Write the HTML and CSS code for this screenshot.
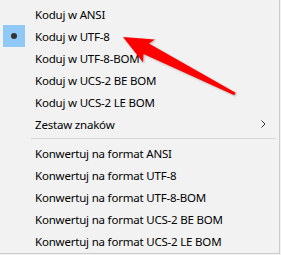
FILE: index.html
```html
<!DOCTYPE html>
<html lang="pl">
<head>
    <meta charset="UTF-8">
    <title>Kodowanie</title>
    <link rel="stylesheet" href="styles.css">
</head>
<body>

<div class="menu">
    <div class="item"><span class="mark"></span>Koduj w ANSI</div>
    <div class="item checked"><span class="mark"><span class="dot"></span></span>Koduj w UTF-8</div>
    <div class="item"><span class="mark"></span>Koduj w UTF-8-BOM</div>
    <div class="item"><span class="mark"></span>Koduj w UCS-2 BE BOM</div>
    <div class="item"><span class="mark"></span>Koduj w UCS-2 LE BOM</div>
    <div class="item"><span class="mark"></span>Zestaw znaków
        <svg class="sub" width="5" height="8" viewBox="0 0 5 8"><path d="M0.5 0.5 L4 4 L0.5 7.5" fill="none" stroke="#333" stroke-width="1"/></svg>
    </div>
    <div class="sep"></div>
    <div class="item"><span class="mark"></span>Konwertuj na format ANSI</div>
    <div class="item"><span class="mark"></span>Konwertuj na format UTF-8</div>
    <div class="item"><span class="mark"></span>Konwertuj na format UTF-8-BOM</div>
    <div class="item"><span class="mark"></span>Konwertuj na format UCS-2 BE BOM</div>
    <div class="item"><span class="mark"></span>Konwertuj na format UCS-2 LE BOM</div>

    <svg class="arrow" width="281" height="255" viewBox="0 0 281 255">
        <polygon points="123,37 155,39.5 148.9,43.5 235.7,92.7 234.3,95.3 143.5,54.1 143,62.5" fill="#f00"/>
    </svg>
</div>

</body>
</html>
```

FILE: styles.css
```css
body {
    margin: 0;
    background: #f2f2f2;
    font-family: "Noto Sans", "Open Sans", sans-serif;
    font-size: 11.5px;
    letter-spacing: -0.2px;
    color: #000;
}
.menu {
    position: relative;
    width: 280px;
    height: 254px;
    box-sizing: border-box;
    padding-top: 3px;
    background: #f2f2f2;
    border-right: 1px solid #cccccc;
    border-bottom: 1px solid #cccccc;
}
.item {
    display: flex;
    align-items: center;
    height: 22px;
    white-space: nowrap;
}
.mark {
    display: flex;
    align-items: center;
    justify-content: center;
    width: 22px;
    height: 22px;
    margin-left: 3px;
    margin-right: 10px;
}
.checked .mark {
    background: #90c8f6;
}
.dot {
    width: 6px;
    height: 6px;
    border-radius: 50%;
    background: #333;
}
.sub {
    margin-left: auto;
    margin-right: 13px;
}
.sep {
    height: 1px;
    margin: 3px 3px 3px 31px;
    background: #d7d7d7;
}
.arrow {
    position: absolute;
    left: 0;
    top: 0;
    filter: drop-shadow(1px 1px 1px rgba(0, 0, 0, 0.25));
}
```
